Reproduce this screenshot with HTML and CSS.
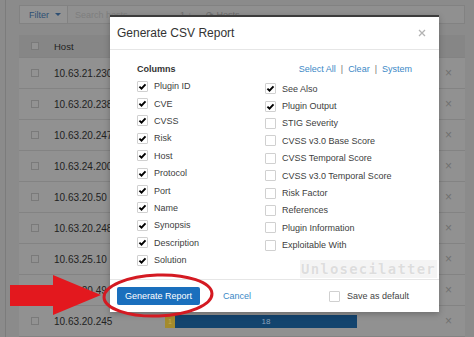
FILE: index.html
```html
<!DOCTYPE html>
<html lang="en">
<head>
  <meta charset="UTF-8" />
  <title>Generate CSV Report</title>
  <link rel="stylesheet" href="styles.css">
</head>
<body>
  <div class="page">
    <div class="toolbar">
      <div class="filter">Filter <span class="caret"></span></div>
      <div class="search">
        <span class="placeholder">Search hosts</span>
        <span class="tb-meta">1 &darr;</span>
        <span class="tb-meta">&#10227; Hosts</span>
      </div>
    </div>

    <div class="table">
      <div class="thead">
        <span class="cb"></span><span class="host">Host</span>
      </div>
      <div class="row"><span class="cb"></span><span class="host">10.63.21.230</span><span class="rm">&times;</span></div>
      <div class="row"><span class="cb"></span><span class="host">10.63.20.238</span><span class="rm">&times;</span></div>
      <div class="row"><span class="cb"></span><span class="host">10.63.20.247</span><span class="rm">&times;</span></div>
      <div class="row"><span class="cb"></span><span class="host">10.63.24.200</span><span class="rm">&times;</span></div>
      <div class="row"><span class="cb"></span><span class="host">10.63.20.50</span><span class="rm">&times;</span></div>
      <div class="row"><span class="cb"></span><span class="host">10.63.20.248</span><span class="rm">&times;</span></div>
      <div class="row"><span class="cb"></span><span class="host">10.63.25.10</span><span class="rm">&times;</span></div>
      <div class="row"><span class="cb"></span><span class="host">10.63.20.49</span><span class="rm">&times;</span></div>
      <div class="row">
        <span class="cb"></span><span class="host">10.63.20.245</span>
        <div class="bars">
          <span class="bar-low">1</span>
          <span class="bar-med">18</span>
        </div>
        <span class="rm">&times;</span>
      </div>
    </div>
  </div>

  <div class="modal">
    <div class="modal-header">
      <span class="modal-title">Generate CSV Report</span>
      <svg class="close" width="8" height="8" viewBox="0 0 8 8"><path d="M1 1L7 7M7 1L1 7" stroke="#b3b3b3" stroke-width="1.3"/></svg>
    </div>

    <div class="modal-body">
      <div class="body-top">
        <span class="columns-title">Columns</span>
        <span class="links">
          <a>Select All</a><span class="sep">|</span><a>Clear</a><span class="sep">|</span><a>System</a>
        </span>
      </div>

      <div class="columns">
        <div class="col">
          <label class="item"><span class="box"><svg viewBox="0 0 11 11"><path d="M2.4 5.6L4.5 7.6L8.5 3.3"/></svg></span>Plugin ID</label>
          <label class="item"><span class="box"><svg viewBox="0 0 11 11"><path d="M2.4 5.6L4.5 7.6L8.5 3.3"/></svg></span>CVE</label>
          <label class="item"><span class="box"><svg viewBox="0 0 11 11"><path d="M2.4 5.6L4.5 7.6L8.5 3.3"/></svg></span>CVSS</label>
          <label class="item"><span class="box"><svg viewBox="0 0 11 11"><path d="M2.4 5.6L4.5 7.6L8.5 3.3"/></svg></span>Risk</label>
          <label class="item"><span class="box"><svg viewBox="0 0 11 11"><path d="M2.4 5.6L4.5 7.6L8.5 3.3"/></svg></span>Host</label>
          <label class="item"><span class="box"><svg viewBox="0 0 11 11"><path d="M2.4 5.6L4.5 7.6L8.5 3.3"/></svg></span>Protocol</label>
          <label class="item"><span class="box"><svg viewBox="0 0 11 11"><path d="M2.4 5.6L4.5 7.6L8.5 3.3"/></svg></span>Port</label>
          <label class="item"><span class="box"><svg viewBox="0 0 11 11"><path d="M2.4 5.6L4.5 7.6L8.5 3.3"/></svg></span>Name</label>
          <label class="item"><span class="box"><svg viewBox="0 0 11 11"><path d="M2.4 5.6L4.5 7.6L8.5 3.3"/></svg></span>Synopsis</label>
          <label class="item"><span class="box"><svg viewBox="0 0 11 11"><path d="M2.4 5.6L4.5 7.6L8.5 3.3"/></svg></span>Description</label>
          <label class="item"><span class="box"><svg viewBox="0 0 11 11"><path d="M2.4 5.6L4.5 7.6L8.5 3.3"/></svg></span>Solution</label>
        </div>
        <div class="col col-right">
          <label class="item"><span class="box"><svg viewBox="0 0 11 11"><path d="M2.4 5.6L4.5 7.6L8.5 3.3"/></svg></span>See Also</label>
          <label class="item"><span class="box"><svg viewBox="0 0 11 11"><path d="M2.4 5.6L4.5 7.6L8.5 3.3"/></svg></span>Plugin Output</label>
          <label class="item"><span class="box"></span>STIG Severity</label>
          <label class="item"><span class="box"></span>CVSS v3.0 Base Score</label>
          <label class="item"><span class="box"></span>CVSS Temporal Score</label>
          <label class="item"><span class="box"></span>CVSS v3.0 Temporal Score</label>
          <label class="item"><span class="box"></span>Risk Factor</label>
          <label class="item"><span class="box"></span>References</label>
          <label class="item"><span class="box"></span>Plugin Information</label>
          <label class="item"><span class="box"></span>Exploitable With</label>
        </div>
      </div>

      <div class="watermark">Unlosecilatter</div>
    </div>

    <div class="modal-footer">
      <button class="btn-primary">Generate Report</button>
      <a class="cancel">Cancel</a>
      <label class="save"><span class="box"></span>Save as default</label>
    </div>
  </div>

  <!-- red annotation drawn over the screenshot -->
  <svg class="annot" width="474" height="337" viewBox="0 0 474 337">
    <polygon points="10,285 53,285 53,275 101,295 53,315 53,306 10,306" fill="#e3181e"/>
    <ellipse cx="158" cy="295.5" rx="54" ry="20.5" fill="none" stroke="#d41a22" stroke-width="3" transform="rotate(-2 158 295.5)"/>
  </svg>
</body>
</html>
```

FILE: styles.css
```css
body {
  margin: 0;
  width: 474px;
  height: 337px;
  overflow: hidden;
  background: #8b8b8b;
  font-family: "Liberation Sans", Arial, sans-serif;
  position: relative;
}

/* dimmed page behind the dialog */
.page {
  margin-left: 5px;
  border-left: 1px solid #7c7c7c;
  padding: 5px 0 0 13px;
  height: 337px;
  box-sizing: border-box;
}
.toolbar {
  display: flex;
  height: 19px;
  width: 446px;
  border: 1px solid #828282;
  box-sizing: border-box;
  background: #909090;
}
.filter {
  width: 48px;
  display: flex;
  align-items: center;
  padding-left: 9px;
  box-sizing: border-box;
  font-size: 9px;
  color: #2e4f73;
  border-right: 1px solid #828282;
  background: #939393;
}
.caret {
  margin-left: 6px;
  width: 0;
  height: 0;
  border-left: 3px solid transparent;
  border-right: 3px solid transparent;
  border-top: 3px solid #2e4f73;
}
.search {
  flex: 1;
  display: flex;
  align-items: center;
  padding-left: 7px;
  font-size: 9px;
  color: #7e7e7e;
}
.placeholder {
  width: 105px;
}
.tb-meta {
  color: #6c6c6c;
  margin-right: 14px;
}
.table {
  margin-top: 11px;
  width: 446px;
  background: #919191;
}
.thead, .row {
  display: flex;
  align-items: center;
  border-bottom: 1px solid #838383;
  box-sizing: border-box;
}
.thead {
  height: 23px;
  background: #868686;
}
.row {
  height: 31px;
}
.cb {
  width: 6px;
  height: 6px;
  border: 1px solid #7a7a7a;
  background: #929292;
  margin: 0 15px 0 12px;
}
.host {
  font-size: 10px;
  color: #222222;
  width: 111px;
}
.thead .host {
  font-size: 9.5px;
}
.rm {
  margin-left: auto;
  width: 26px;
  font-size: 12px;
  color: #707070;
  padding-left: 6px;
  box-sizing: border-box;
}
.bars {
  display: flex;
  height: 13px;
}
.bar-low {
  width: 10px;
  background: #a48b2d;
  color: #c4ad55;
  font-size: 7px;
  line-height: 13px;
  text-align: center;
}
.bar-med {
  width: 182px;
  background: #13446e;
  color: #8aa2bb;
  font-size: 8px;
  line-height: 13px;
  text-align: center;
}

/* dialog */
.modal {
  position: absolute;
  left: 110px;
  top: 15px;
  width: 329px;
  background: #ffffff;
  border-top: 2px solid #3c3c3c;
  box-shadow: 0 2px 6px rgba(0,0,0,0.25);
}
.modal-header {
  height: 33px;
  display: flex;
  align-items: center;
  justify-content: space-between;
  padding: 0 13px 0 7px;
  border-bottom: 1px solid #e6e6e6;
  box-sizing: border-box;
}
.modal-title {
  font-size: 12px;
  color: #333333;
}
.modal-body {
  position: relative;
  height: 229px;
  padding: 13px 27px 0 27px;
  box-sizing: border-box;
  font-size: 9px;
}
.body-top {
  display: flex;
  justify-content: space-between;
  line-height: 12px;
}
.columns-title {
  font-weight: bold;
  color: #333333;
}
.links a {
  color: #3b88c6;
}
.sep {
  color: #777777;
  margin: 0 5px;
}
.columns {
  display: grid;
  grid-template-columns: 128px 1fr;
  margin-top: 2.5px;
}
.col-right {
  margin-top: 2.5px;
}
.item {
  height: 17.4px;
  display: flex;
  align-items: center;
  color: #404040;
}
.box {
  width: 11px;
  height: 11px;
  border: 1px solid #d0d0d0;
  border-radius: 1px;
  box-sizing: border-box;
  margin-right: 6px;
  flex-shrink: 0;
  position: relative;
}
.box svg {
  position: absolute;
  left: -1px;
  top: -1px;
  width: 11px;
  height: 11px;
}
.box path {
  fill: none;
  stroke: #000000;
  stroke-width: 1.9;
}
.watermark {
  position: absolute;
  right: 2px;
  bottom: 1px;
  width: 137px;
  height: 18px;
  background: rgba(236,236,236,0.6);
  font-family: "DejaVu Sans Mono", monospace;
  font-weight: bold;
  font-size: 14px;
  letter-spacing: 1.2px;
  line-height: 18px;
  color: #dddddd;
  text-shadow: 0 0 1px #ffffff, 1px 1px 0 #f7f7f7;
  text-align: center;
}
.modal-footer {
  height: 33px;
  display: flex;
  align-items: center;
  padding: 0 30px 0 7px;
  border-top: 1px solid #e6e6e6;
  box-sizing: border-box;
  font-size: 9px;
}
.btn-primary {
  height: 18px;
  padding: 0 8px;
  background: #1a6fbd;
  color: #ffffff;
  border: none;
  border-radius: 2px;
  font-family: inherit;
  font-size: 9px;
}
.cancel {
  margin-left: 23px;
  color: #3b88c6;
}
.save {
  margin-left: auto;
  display: flex;
  align-items: center;
  color: #444444;
}
.save .box {
  margin-right: 7px;
}

.annot {
  position: absolute;
  left: 0;
  top: 0;
  pointer-events: none;
}
```
